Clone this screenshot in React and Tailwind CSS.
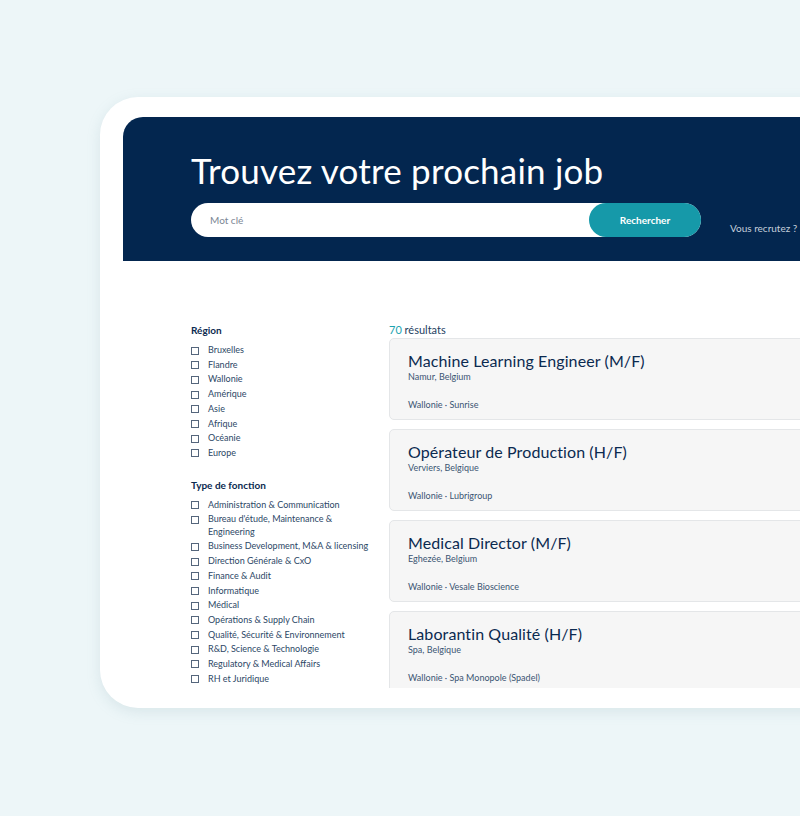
import React from 'react';

const regions = ['Bruxelles', 'Flandre', 'Wallonie', 'Amérique', 'Asie', 'Afrique', 'Océanie', 'Europe'];

const fonctions = [
  'Administration & Communication',
  "Bureau d'étude, Maintenance & Engineering",
  'Business Development, M&A & licensing',
  'Direction Générale & CxO',
  'Finance & Audit',
  'Informatique',
  'Médical',
  'Opérations & Supply Chain',
  'Qualité, Sécurité & Environnement',
  'R&D, Science & Technologie',
  'Regulatory & Medical Affairs',
  'RH et Juridique',
];

const jobs = [
  { title: 'Machine Learning Engineer (M/F)', place: 'Namur, Belgium', meta: 'Wallonie · Sunrise' },
  { title: 'Opérateur de Production (H/F)', place: 'Verviers, Belgique', meta: 'Wallonie · Lubrigroup' },
  { title: 'Medical Director (M/F)', place: 'Eghezée, Belgium', meta: 'Wallonie · Vesale Bioscience' },
  { title: 'Laborantin Qualité (H/F)', place: 'Spa, Belgique', meta: 'Wallonie · Spa Monopole (Spadel)' },
];

const FilterGroup = ({ title, items }) => (
  <div>
    <h4 className="text-[10px] font-bold text-[#0b2a50] leading-[14px]">{title}</h4>
    <ul className="mt-[6px]">
      {items.map((item) => (
        <li key={item} className="flex items-start text-[9px] leading-[12.5px] text-[#2c4766] py-[1.1px]">
          <span className="mt-[2.5px] w-[8px] h-[8px] border border-[#55667c] shrink-0 mr-[9px]"></span>
          <span className="w-[162px]">{item}</span>
        </li>
      ))}
    </ul>
  </div>
);

export default function App() {
  return (
    <div className="w-[800px] h-[816px] overflow-hidden bg-[#edf6f8] pt-[97px] pl-[100px]" style={{ fontFamily: 'Lato, "Noto Sans", sans-serif' }}>
      {/* white device frame */}
      <div className="w-[760px] bg-white rounded-l-[38px] pt-[20px] pl-[23px] pb-[20px] shadow-[0_4px_14px_rgba(120,160,170,0.18)]">
        {/* header */}
        <div className="h-[144px] bg-[#03264f] rounded-tl-[20px] pl-[68px] pt-[33px]">
          <h1 className="text-[35px] leading-[41px] text-white font-normal tracking-[0.2px]">Trouvez votre prochain job</h1>
          <div className="flex items-end mt-[12px]">
            <div className="relative w-[510px] h-[34px] bg-white rounded-full flex items-center pl-[19px]">
              <span className="text-[10px] text-[#7b8694]">Mot clé</span>
              <button className="absolute right-0 top-0 h-[34px] w-[112px] rounded-full bg-[#1699a9] text-white text-[10px] font-bold">
                Rechercher
              </button>
            </div>
            <span className="ml-[29px] mb-[1px] text-[10px] text-[#c5cfdb]">Vous recrutez ?</span>
          </div>
        </div>

        {/* body */}
        <div className="h-[427px] overflow-hidden flex pl-[68px] pt-[62px]">
          <aside className="w-[198px] shrink-0 flex flex-col gap-[17px]">
            <FilterGroup title="Région" items={regions} />
            <FilterGroup title="Type de fonction" items={fonctions} />
          </aside>
          <main className="flex-1">
            <p className="text-[11px] leading-[14px] text-[#24405f]">
              <span className="text-[#1ca3b0]">70</span> résultats
            </p>
            <div className="flex flex-col gap-[9px] mt-[1px]">
              {jobs.map((job) => (
                <div key={job.title} className="h-[82px] bg-[#f6f6f6] border border-[#e4e6e8] rounded-[5px] pl-[18px] pt-[11px]">
                  <h3 className="text-[16px] leading-[21px] text-[#0b2a50] tracking-[0.1px]">{job.title}</h3>
                  <p className="text-[9px] leading-[12px] text-[#3b5573]">{job.place}</p>
                  <p className="text-[9px] leading-[12px] text-[#3b5573] mt-[16px]">{job.meta}</p>
                </div>
              ))}
            </div>
          </main>
        </div>
      </div>
    </div>
  );
}
